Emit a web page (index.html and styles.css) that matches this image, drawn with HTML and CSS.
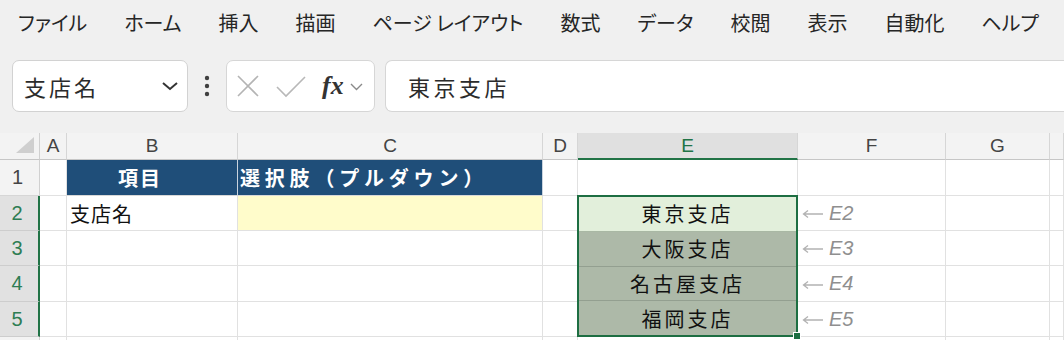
FILE: index.html
```html
<!DOCTYPE html>
<html lang="ja">
<head>
<meta charset="utf-8">
<title>Excel</title>
<link rel="stylesheet" href="styles.css">
</head>
<body>
<div class="menubar">
  <span class="m">ファイル</span>
  <span class="m">ホーム</span>
  <span class="m">挿入</span>
  <span class="m">描画</span>
  <span class="m">ページ レイアウト</span>
  <span class="m">数式</span>
  <span class="m">データ</span>
  <span class="m">校閲</span>
  <span class="m">表示</span>
  <span class="m">自動化</span>
  <span class="m">ヘルプ</span>
</div>
<div class="fbar">
  <div class="namebox">
    <span class="nb-text">支店名</span>
    <svg class="nb-chev" width="18" height="10" viewBox="0 0 18 10"><polyline points="2,2 9,8 16,2" fill="none" stroke="#333" stroke-width="2"/></svg>
  </div>
  <div class="dots">
    <svg width="8" height="22" viewBox="0 0 8 22"><circle cx="4" cy="3" r="2.2" fill="#404040"/><circle cx="4" cy="11" r="2.2" fill="#404040"/><circle cx="4" cy="19" r="2.2" fill="#404040"/></svg>
  </div>
  <div class="fxbox">
    <svg class="ic-x" width="22" height="22" viewBox="0 0 22 22"><path d="M1 1 L21 21 M21 1 L1 21" stroke="#b4b4b4" stroke-width="1.6" fill="none"/></svg>
    <svg class="ic-check" width="30" height="22" viewBox="0 0 30 22"><polyline points="1,11 10,20 29,1" fill="none" stroke="#b8b8b8" stroke-width="1.6"/></svg>
    <span class="fx">fx</span>
    <svg class="ic-chev" width="13" height="8" viewBox="0 0 13 8"><polyline points="1,1 6.5,6.5 12,1" fill="none" stroke="#8a8a8a" stroke-width="1.4"/></svg>
  </div>
  <div class="formula">東京支店</div>
</div>
<div class="sheet">
  <!-- header row -->
  <div class="corner"><span class="tri"></span></div>
  <div class="ch">A</div>
  <div class="ch">B</div>
  <div class="ch">C</div>
  <div class="ch">D</div>
  <div class="ch sel">E</div>
  <div class="ch">F</div>
  <div class="ch">G</div>
  <div class="ch"></div>
  <!-- row 1 -->
  <div class="rh">1</div>
  <div class="c"></div>
  <div class="c hd hd-b">項目</div>
  <div class="c hd hd-c">選択肢（プルダウン）</div>
  <div class="c"></div>
  <div class="c"></div>
  <div class="c"></div>
  <div class="c"></div>
  <div class="c"></div>
  <!-- row 2 -->
  <div class="rh on">2</div>
  <div class="c"></div>
  <div class="c txt">支店名</div>
  <div class="c yellow"></div>
  <div class="c"></div>
  <div class="selection">
    <div class="sc first">東京支店</div>
    <div class="sc">大阪支店</div>
    <div class="sc">名古屋支店</div>
    <div class="sc last">福岡支店</div>
    <span class="handle"></span>
  </div>
  <div class="c note"><svg class="arr" width="22" height="10" viewBox="0 0 22 10"><path d="M21 5 H2 M6 1.5 L1.5 5 L6 8.5" fill="none" stroke="#b2b2b2" stroke-width="1.3"/></svg><span class="ref">E2</span></div>
  <div class="c"></div>
  <div class="c"></div>
  <!-- row 3 -->
  <div class="rh on">3</div>
  <div class="c"></div>
  <div class="c"></div>
  <div class="c"></div>
  <div class="c"></div>
  <div class="c note"><svg class="arr" width="22" height="10" viewBox="0 0 22 10"><path d="M21 5 H2 M6 1.5 L1.5 5 L6 8.5" fill="none" stroke="#b2b2b2" stroke-width="1.3"/></svg><span class="ref">E3</span></div>
  <div class="c"></div>
  <div class="c"></div>
  <!-- row 4 -->
  <div class="rh on">4</div>
  <div class="c"></div>
  <div class="c"></div>
  <div class="c"></div>
  <div class="c"></div>
  <div class="c note"><svg class="arr" width="22" height="10" viewBox="0 0 22 10"><path d="M21 5 H2 M6 1.5 L1.5 5 L6 8.5" fill="none" stroke="#b2b2b2" stroke-width="1.3"/></svg><span class="ref">E4</span></div>
  <div class="c"></div>
  <div class="c"></div>
  <!-- row 5 -->
  <div class="rh on">5</div>
  <div class="c"></div>
  <div class="c"></div>
  <div class="c"></div>
  <div class="c"></div>
  <div class="c note"><svg class="arr" width="22" height="10" viewBox="0 0 22 10"><path d="M21 5 H2 M6 1.5 L1.5 5 L6 8.5" fill="none" stroke="#b2b2b2" stroke-width="1.3"/></svg><span class="ref">E5</span></div>
  <div class="c"></div>
  <div class="c"></div>
  <!-- row 6 -->
  <div class="rh"></div>
  <div class="c"></div>
  <div class="c"></div>
  <div class="c"></div>
  <div class="c"></div>
  <div class="c"></div>
  <div class="c"></div>
  <div class="c"></div>
  <div class="c"></div>
</div>
</body>
</html>
```

FILE: styles.css
```css
* { box-sizing: border-box; }
html, body {
  margin: 0;
  padding: 0;
  width: 1064px;
  height: 340px;
  overflow: hidden;
  background: #f0f0f0;
  font-family: "Noto Sans CJK JP", "Noto Sans", sans-serif;
  color: #262626;
}

.menubar {
  height: 46px;
  display: flex;
  align-items: center;
  gap: 37px;
  padding-left: 18px;
  font-size: 20px;
  font-feature-settings: "palt";
  white-space: nowrap;
}
.m { line-height: 1; }

.fbar {
  display: flex;
  align-items: stretch;
  height: 52px;
  margin-top: 14px;
  padding-left: 12px;
}
.namebox {
  width: 176px;
  background: #fff;
  border: 1px solid #d2d2d2;
  border-radius: 7px;
  display: flex;
  align-items: center;
  justify-content: space-between;
  padding: 0 8px 0 11px;
}
.nb-text {
  font-size: 22px;
  letter-spacing: 3px;
  color: #2b2b2b;
}
.dots {
  width: 38px;
  display: flex;
  align-items: center;
  justify-content: center;
}
.fxbox {
  width: 149px;
  background: #fff;
  border: 1px solid #d6d6d6;
  border-radius: 7px;
  display: flex;
  align-items: center;
  padding-left: 10px;
}
.ic-x { margin-right: 17px; }
.ic-check { margin-right: 16px; margin-top: 2px; }
.fx {
  font-family: "Liberation Serif", "DejaVu Serif", serif;
  font-style: italic;
  font-weight: bold;
  font-size: 26px;
  color: #333;
  line-height: 1;
  margin-right: 6px;
}
.ic-chev { margin-top: 2px; }
.formula {
  flex: 1;
  margin-left: 10px;
  background: #fff;
  border: 1px solid #d6d6d6;
  border-right: none;
  border-radius: 7px 0 0 7px;
  display: flex;
  align-items: center;
  padding-left: 22px;
  font-size: 22px;
  letter-spacing: 3.5px;
  color: #2b2b2b;
}

.sheet {
  margin-top: 21px;
  display: grid;
  grid-template-columns: 40px 27px 171px 305px 35px 220px 148px 104px 1fr;
  grid-template-rows: 27px 36px 35px 35px 36px 35px 20px;
  background: #fff;
}

.corner {
  background: #f3f3f3;
  border-right: 1px solid #d0d0d0;
  border-bottom: 1px solid #c6c6c6;
  position: relative;
}
.tri {
  position: absolute;
  right: 5px;
  bottom: 6px;
  width: 0;
  height: 0;
  border-left: 18px solid transparent;
  border-bottom: 16px solid #cfcfcf;
}
.ch {
  background: #f3f3f3;
  border-right: 1px solid #d6d6d6;
  border-bottom: 1px solid #c6c6c6;
  display: flex;
  align-items: center;
  justify-content: center;
  font-family: "Liberation Sans", "Noto Sans", sans-serif;
  font-size: 19px;
  color: #444;
}
.ch.sel {
  background: #e0e0e0;
  color: #217346;
  border-bottom: 2px solid #217346;
}

.rh {
  background: #f3f3f3;
  border-right: 1px solid #d0d0d0;
  border-bottom: 1px solid #d6d6d6;
  display: flex;
  align-items: center;
  justify-content: center;
  font-family: "Liberation Sans", "Noto Sans", sans-serif;
  font-size: 20px;
  color: #444;
  padding-right: 4px;
}
.rh.on {
  background: #e1e1e1;
  color: #2e7d53;
  border-right: 2px solid #217346;
  border-bottom: 1px solid #cdcdcd;
}

.c {
  border-right: 1px solid #e1e1e1;
  border-bottom: 1px solid #e1e1e1;
  display: flex;
  align-items: center;
  font-size: 20px;
  color: #111;
  min-width: 0;
}
.hd {
  background: #1f4e79;
  color: #fff;
  font-weight: bold;
  border-right-color: #c9d3de;
  border-bottom-color: #d8d8d8;
}
.hd-b { padding-left: 51px; letter-spacing: 2px; }
.hd-c { padding-left: 2px; letter-spacing: 4.8px; white-space: nowrap; }
.txt { padding-left: 3px; letter-spacing: 1px; }
.yellow { background: #fffccb; }

.selection {
  grid-column: 6;
  grid-row: 3 / 7;
  border: 2px solid #1d6e42;
  margin: -1px 0 0 -1px;
  display: flex;
  flex-direction: column;
  position: relative;
  background: #adb9a8;
}
.sc {
  flex: 1;
  display: flex;
  align-items: center;
  justify-content: center;
  font-size: 20px;
  letter-spacing: 3px;
  color: #111;
  border-bottom: 1px solid #939f90;
  background: #adb9a8;
}
.sc.first { background: #e2efdb; border-bottom-color: #a9b8a4; }
.sc.last { border-bottom: none; }
.handle {
  position: absolute;
  right: -5px;
  bottom: -5px;
  width: 8px;
  height: 8px;
  background: #1d6e42;
  border: 1px solid #fff;
}

.note {
  padding-left: 4px;
  font-family: "Liberation Sans", "Noto Sans", sans-serif;
  color: #8f8f8f;
}
.arr {
  margin-right: 5px;
  margin-top: 2px;
}
.ref {
  font-style: italic;
  font-size: 20px;
}
```
